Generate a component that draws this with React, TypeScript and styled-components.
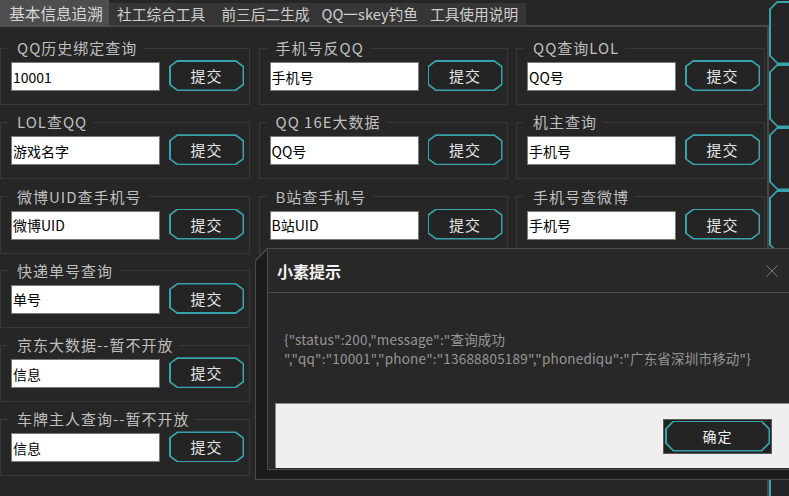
import React from 'react';
import styled, { createGlobalStyle } from 'styled-components';
import { X } from 'lucide-react';

const TEAL = '#38a3ad';
const FONT = '"Noto Sans CJK SC", "Noto Sans", sans-serif';

const chamfer = (x: number, y: number) =>
  `polygon(${x}px 0, calc(100% - ${x}px) 0, 100% ${y}px, 100% calc(100% - ${y}px), calc(100% - ${x}px) 100%, ${x}px 100%, 0 calc(100% - ${y}px), 0 ${y}px)`;

const GlobalStyle = createGlobalStyle`
  html, body {
    margin: 0;
    padding: 0;
    background: #262626;
  }
  body {
    font-family: ${FONT};
  }
`;

const Window = styled.div`
  position: relative;
  display: flex;
  width: 789px;
  height: 496px;
  overflow: hidden;
  background: #262626;
`;

const Main = styled.div`
  flex: none;
  width: 769px;
  display: flex;
  flex-direction: column;
`;

const TabBar = styled.div`
  display: flex;
  align-items: flex-end;
  height: 25px;
  border-bottom: 2px solid #474747;
`;

const Tab = styled.div<{ $active?: boolean }>`
  display: flex;
  align-items: center;
  justify-content: center;
  box-sizing: border-box;
  width: ${(p) => (p.$active ? 109 : 104.3)}px;
  height: ${(p) => (p.$active ? 27 : 22)}px;
  margin-bottom: ${(p) => (p.$active ? -2 : 0)}px;
  padding-left: ${(p) => (p.$active ? 3 : 0)}px;
  background: ${(p) => (p.$active ? '#4e4e4e' : '#363636')};
  color: ${(p) => (p.$active ? '#d6d6d6' : '#cfcfcf')};
  font-size: ${(p) => (p.$active ? 15.6 : 14.7)}px;
  line-height: 1;
  white-space: nowrap;
`;

const Pane = styled.div`
  flex: 1;
  display: grid;
  grid-template-columns: 250px 249px 249px;
  column-gap: 8.5px;
  align-items: start;
  padding-top: 13px;
  border-right: 2px solid #474747;
`;

const Column = styled.div`
  display: flex;
  flex-direction: column;
  gap: 9.3px;
`;

const Group = styled.fieldset`
  margin: 0;
  min-width: 0;
  padding: 4px 4px 13px 10px;
  border: 1px solid #383838;
`;

const Legend = styled.legend`
  margin-left: -3px;
  padding: 0 6px 0 9px;
  font-size: 15px;
  line-height: 16px;
  letter-spacing: 1px;
  color: #bfbfbf;
`;

const Row = styled.div`
  display: flex;
  align-items: flex-end;
  gap: 9px;
`;

const Field = styled.input`
  box-sizing: border-box;
  width: 149px;
  height: 29px;
  padding: 0 1px;
  border: 1px solid #7a7a7a;
  background: #fff;
  color: #000;
  font-family: ${FONT};
  font-size: 14px;
  outline: none;
`;

const ChamferButton = styled.button<{ $w: number; $h: number; $cx?: number; $cy?: number }>`
  position: relative;
  isolation: isolate;
  flex: none;
  width: ${(p) => p.$w}px;
  height: ${(p) => p.$h}px;
  padding: 0;
  border: none;
  background: ${TEAL};
  clip-path: ${(p) => chamfer(p.$cx ?? 8, p.$cy ?? 6)};
  color: #e6e6e6;
  font-family: ${FONT};
  font-size: 15px;
  line-height: 1;
  letter-spacing: 1px;
  cursor: pointer;

  &::before {
    content: '';
    position: absolute;
    inset: 1.5px;
    z-index: -1;
    background: #242424;
    clip-path: ${(p) => chamfer((p.$cx ?? 8) - 0.6, (p.$cy ?? 6) - 0.6)};
  }
`;

const Side = styled.div`
  flex: 1;
  min-width: 0;
  display: flex;
  flex-direction: column;
  padding-top: 1px;
  overflow: hidden;
`;

const DialogFrame = styled.div`
  position: absolute;
  left: 255px;
  top: 248px;
  width: 552px;
  height: 232px;
  display: flex;
  padding-left: 12px;
  box-sizing: border-box;
  z-index: 5;

  &::before,
  &::after {
    content: '';
    position: absolute;
    clip-path: polygon(12px 0, 100% 0, 100% 100%, 0 100%, 0 12px);
  }
  &::before {
    inset: 0;
    background: #4a4a4a;
  }
  &::after {
    inset: 1px;
    background: #1b1b1b;
  }
`;

const DialogBox = styled.div`
  position: relative;
  z-index: 1;
  box-sizing: border-box;
  width: 540px;
  height: 222px;
  display: flex;
  flex-direction: column;
  background: #282828;
  border: 1px solid #4a4a4a;
`;

const DialogHeader = styled.div`
  flex: none;
  height: 43px;
  display: flex;
  align-items: center;
  justify-content: space-between;
  padding: 0 24px 0 9px;
  border-bottom: 1px solid #4a4a4a;
`;

const DialogTitle = styled.div`
  font-size: 16px;
  font-weight: 700;
  color: #f2f2f2;
`;

const CloseIcon = styled(X)`
  color: #8c8c8c;
`;

const DialogBody = styled.div`
  flex: 1;
  display: flex;
  flex-direction: column;
  padding: 0 7px 1px 7px;
`;

const Message = styled.div`
  height: 110px;
  box-sizing: border-box;
  padding: 37px 9px 0 9px;
  font-size: 13.5px;
  line-height: 19px;
  letter-spacing: 0.2px;
  color: #969696;
  white-space: pre-wrap;
`;

const Footer = styled.div`
  flex: 1;
  display: flex;
  align-items: center;
  justify-content: flex-end;
  padding-right: 27px;
  background: #efefef;
  border-top: 1px solid #8a8a8a;
  border-left: 1px solid #8a8a8a;
`;

const OkFrame = styled.div`
  display: flex;
  padding: 1px;
  background: #222;
  border: 1px solid #5a5a5a;
`;

const OkButton = styled(ChamferButton)`
  font-size: 14px;
  color: #f0f0f0;
`;

type Query = { title: string; value: string };

const columns: Query[][] = [
  [
    { title: 'QQ历史绑定查询', value: '10001' },
    { title: 'LOL查QQ', value: '游戏名字' },
    { title: '微博UID查手机号', value: '微博UID' },
    { title: '快递单号查询', value: '单号' },
    { title: '京东大数据--暂不开放', value: '信息' },
    { title: '车牌主人查询--暂不开放', value: '信息' },
  ],
  [
    { title: '手机号反QQ', value: '手机号' },
    { title: 'QQ 16E大数据', value: 'QQ号' },
    { title: 'B站查手机号', value: 'B站UID' },
  ],
  [
    { title: 'QQ查询LOL', value: 'QQ号' },
    { title: '机主查询', value: '手机号' },
    { title: '手机号查微博', value: '手机号' },
  ],
];

const tabs = ['基本信息追溯', '社工综合工具', '前三后二生成', 'QQ一skey钓鱼', '工具使用说明'];

const message =
  '{"status":200,"message":"查询成功\n","qq":"10001","phone":"13688805189","phonediqu":"广东省深圳市移动"}';

export default function App() {
  return (
    <Window>
      <GlobalStyle />
      <Main>
        <TabBar>
          {tabs.map((t, i) => (
            <Tab key={t} $active={i === 0}>
              {t}
            </Tab>
          ))}
        </TabBar>
        <Pane>
          {columns.map((col, ci) => (
            <Column key={ci}>
              {col.map((q) => (
                <Group key={q.title}>
                  <Legend>{q.title}</Legend>
                  <Row>
                    <Field defaultValue={q.value} />
                    <ChamferButton $w={75} $h={31}>
                      提交
                    </ChamferButton>
                  </Row>
                </Group>
              ))}
            </Column>
          ))}
        </Pane>
      </Main>
      <Side>
        {Array.from({ length: 8 }).map((_, i) => (
          <ChamferButton key={i} $w={60} $h={63} $cx={8} $cy={8} />
        ))}
      </Side>

      <DialogFrame>
        <DialogBox>
          <DialogHeader>
            <DialogTitle>小素提示</DialogTitle>
            <CloseIcon size={20} strokeWidth={1} />
          </DialogHeader>
          <DialogBody>
            <Message>{message}</Message>
            <Footer>
              <OkFrame>
                <OkButton $w={105} $h={31} $cx={8} $cy={8}>
                  确定
                </OkButton>
              </OkFrame>
            </Footer>
          </DialogBody>
        </DialogBox>
      </DialogFrame>
    </Window>
  );
}
